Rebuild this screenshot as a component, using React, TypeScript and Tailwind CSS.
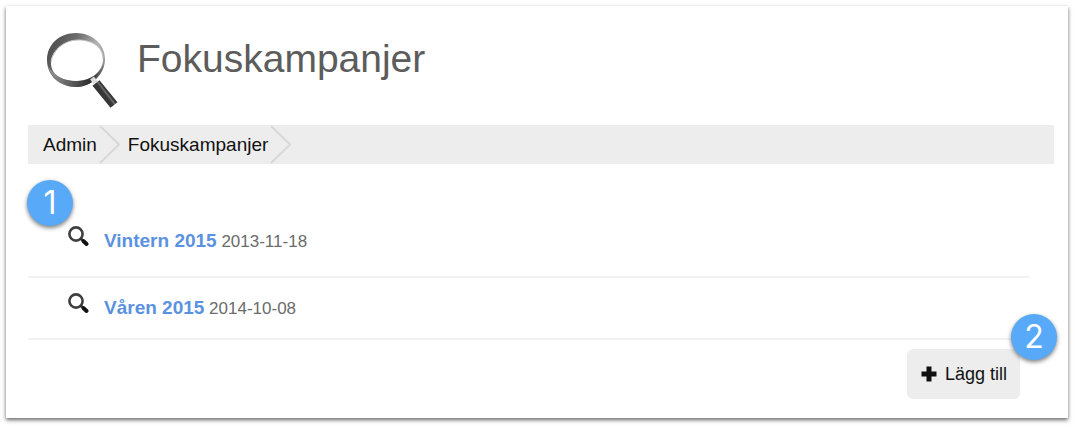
import React from 'react';

type Campaign = {
  id: number;
  name: string;
  date: string;
};

const campaigns: Campaign[] = [
  { id: 1, name: 'Vintern 2015', date: '2013-11-18' },
  { id: 2, name: 'Våren 2015', date: '2014-10-08' },
];

const breadcrumbs = ['Admin', 'Fokuskampanjer'];

const MagnifierLogo: React.FC = () => (
  <svg className="h-20 w-20 shrink-0" viewBox="0 0 80 80" fill="none" aria-hidden="true">
    <defs>
      <linearGradient id="rim" x1="6" y1="14" x2="66" y2="44" gradientUnits="userSpaceOnUse">
        <stop offset="0" stopColor="#4a4a4a" />
        <stop offset="0.35" stopColor="#6c6c6c" />
        <stop offset="0.65" stopColor="#b0b0b0" />
        <stop offset="0.85" stopColor="#a4a4a4" />
        <stop offset="1" stopColor="#555555" />
      </linearGradient>
      <linearGradient id="lower" x1="6" y1="40" x2="62" y2="50" gradientUnits="userSpaceOnUse">
        <stop offset="0" stopColor="#9a9a9a" />
        <stop offset="0.5" stopColor="#555555" />
        <stop offset="0.8" stopColor="#2a2a2a" />
        <stop offset="1" stopColor="#8a8a8a" />
      </linearGradient>
      <linearGradient id="handle" x1="59" y1="68" x2="68" y2="61" gradientUnits="userSpaceOnUse">
        <stop offset="0" stopColor="#333333" />
        <stop offset="0.4" stopColor="#3a3a3a" />
        <stop offset="0.5" stopColor="#707070" />
        <stop offset="0.65" stopColor="#3c3c3c" />
        <stop offset="1" stopColor="#2a2a2a" />
      </linearGradient>
    </defs>
    {/* Rim with an offset lens opening */}
    <path
      fillRule="evenodd"
      fill="url(#rim)"
      d="M34 5C50 5 63 16 63 31S50 59 34 59 5 48 5 32 18 5 34 5ZM36 12C22 12 9 23 9 35S20 53 34 53 61 44 61 31 50 12 36 12Z"
    />
    <path fill="url(#lower)" d="M6 38C12 48 22 53 34 53S56 48 62 36C59 51 46 59 34 59S10 52 6 38Z" />
    <path stroke="#c4c4c4" d="M9 34C11 22 22 12 36 12S61 19 61 31" />
    <path stroke="#dddddd" strokeWidth="5" d="M50 50L54 55" />
    <path stroke="url(#handle)" strokeWidth="9" d="M54 55L72 77" />
  </svg>
);

const SearchIcon: React.FC = () => (
  <svg className="h-[22px] w-[22px] shrink-0" viewBox="0 0 22 22" fill="none" aria-hidden="true">
    <circle cx="8" cy="8" r="6.6" stroke="#3f3f3f" strokeWidth="2.6" />
    <path stroke="#333333" strokeWidth="2.8" d="M12.5 12.5L16 15.5" />
    <path stroke="#111111" strokeWidth="4" strokeLinecap="round" d="M15.6 15.2L18.6 18" />
  </svg>
);

const PlusIcon: React.FC = () => (
  <svg className="h-4 w-4 shrink-0" viewBox="0 0 16 16" fill="#111111" aria-hidden="true">
    <path d="M5.5 0.5h5v5h5v5h-5v5h-5v-5h-5v-5h5z" />
  </svg>
);

const Badge: React.FC<{ label: string; className: string }> = ({ label, className }) => (
  <span
    className={`absolute flex h-[46px] w-[46px] items-center justify-center rounded-full bg-[#58a9f7] font-[Inter,sans-serif] text-[32px] leading-none text-white shadow-[0_2px_4px_rgba(0,0,0,0.5)] ${className}`}
  >
    {label}
  </span>
);

const App: React.FC = () => {
  return (
    <div className="bg-white pt-[6px] pr-3 pb-[11px] pl-[6px] font-['Liberation_Sans',Arial,sans-serif]">
      <div className="bg-white pt-[22px] pr-[14px] pb-[19px] pl-[22px] shadow-[0_2px_4px_rgba(0,0,0,0.6)]">
        <header className="flex items-start gap-[15px] pl-[14px]">
          <MagnifierLogo />
          <h1 className="pt-[9px] text-[39px] leading-[44px] text-[#5c5c5c]">Fokuskampanjer</h1>
        </header>

        {/* Breadcrumbs */}
        <nav aria-label="Brödsmulor" className="mt-[17px] bg-[#ededed] pl-[15px]">
          <ol className="flex h-[39px]">
            {breadcrumbs.map(crumb => (
              <li key={crumb} className="flex items-center pr-2 text-[19px] leading-6 text-[#111111]">
                <a href="#">{crumb}</a>
                <svg className="ml-[2px] h-[39px] w-[21px]" viewBox="0 0 21 39" fill="none" aria-hidden="true">
                  <path stroke="#d8d8d8" strokeWidth="2" d="M1 1L20 19.5L1 38" />
                </svg>
              </li>
            ))}
          </ol>
        </nav>

        {/* Campaign list */}
        <main className="relative pt-[47px] pr-[25px]">
          <Badge label="1" className="top-4 -left-px" />
          <ul>
            {campaigns.map(campaign => (
              <li
                key={campaign.id}
                className="flex items-start gap-[14px] border-b-2 border-[#f2f2f2] pt-[15px] pb-[19px] pl-10 first:pb-6"
              >
                <SearchIcon />
                <p className="pt-[5px] text-[17px] leading-5 text-[#6b6b6b]">
                  <a href="#" className="text-[19px] font-bold text-[#5b92e0]">{campaign.name}</a>{' '}
                  {campaign.date}
                </p>
              </li>
            ))}
          </ul>
          <div className="flex justify-end pt-[9px] pr-[9px]">
            <div className="relative">
              <button
                type="button"
                className="flex h-[50px] items-center gap-2 rounded-md bg-[#ededed] pr-[13px] pl-[14px] text-[18px] leading-6 text-[#111111]"
              >
                <PlusIcon />
                Lägg till
              </button>
              <Badge label="2" className="-top-[35px] -right-[37px]" />
            </div>
          </div>
        </main>
      </div>
    </div>
  );
};

export default App;
